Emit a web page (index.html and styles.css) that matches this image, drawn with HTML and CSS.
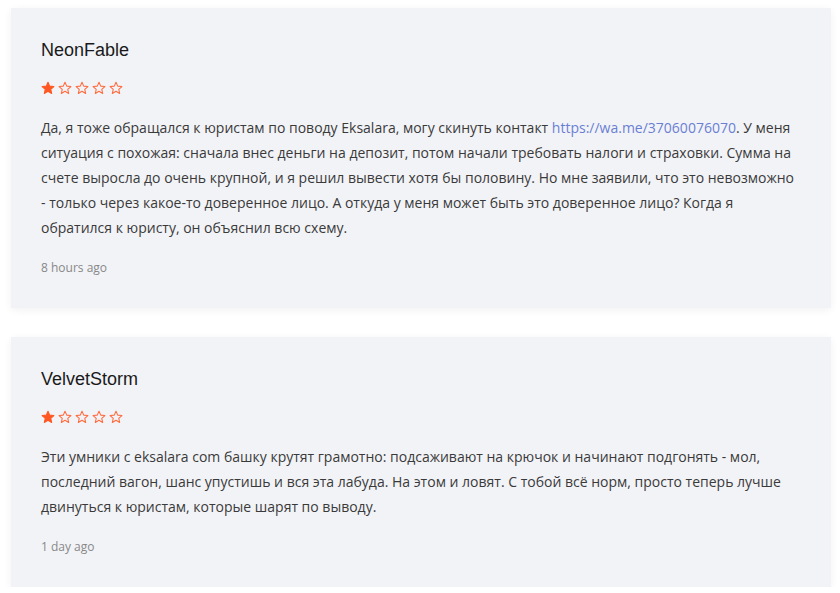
FILE: index.html
```html
<!DOCTYPE html>
<html lang="ru">
<head>
<meta charset="utf-8">
<link rel="stylesheet" href="styles.css">
</head>
<body>
<svg width="0" height="0" class="defs">
  <defs>
    <symbol id="star" viewBox="0 0 24 24">
      <path d="M12 2.2l2.95 6.6 7.2.7-5.42 4.8 1.57 7.07L12 17.7l-6.3 3.67 1.57-7.07L1.85 9.5l7.2-.7z"/>
    </symbol>
  </defs>
</svg>
<div class="list">
  <div class="review">
    <div class="name">NeonFable</div>
    <div class="stars">
      <svg class="star full"><use href="#star"/></svg>
      <svg class="star"><use href="#star"/></svg>
      <svg class="star"><use href="#star"/></svg>
      <svg class="star"><use href="#star"/></svg>
      <svg class="star"><use href="#star"/></svg>
    </div>
    <p class="text">Да, я тоже обращался к юристам по поводу Eksalara, могу скинуть контакт <a class="link" href="#">https://wa.me/37060076070</a>. У меня ситуация с похожая: сначала внес деньги на депозит, потом начали требовать налоги и страховки. Сумма на счете выросла до очень крупной, и я решил вывести хотя бы половину. Но мне заявили, что это невозможно - только через какое-то доверенное лицо. А откуда у меня может быть это доверенное лицо? Когда я обратился к юристу, он объяснил всю схему.</p>
    <div class="time">8 hours ago</div>
  </div>
  <div class="review">
    <div class="name">VelvetStorm</div>
    <div class="stars">
      <svg class="star full"><use href="#star"/></svg>
      <svg class="star"><use href="#star"/></svg>
      <svg class="star"><use href="#star"/></svg>
      <svg class="star"><use href="#star"/></svg>
      <svg class="star"><use href="#star"/></svg>
    </div>
    <p class="text">Эти умники с eksalara com башку крутят грамотно: подсаживают на крючок и начинают подгонять - мол, последний вагон, шанс упустишь и вся эта лабуда. На этом и ловят. С тобой всё норм, просто теперь лучше двинуться к юристам, которые шарят по выводу.</p>
    <div class="time">1 day ago</div>
  </div>
</div>
</body>
</html>
```

FILE: styles.css
```css
html, body {
  margin: 0;
  padding: 0;
  background: #ffffff;
}
.defs {
  position: absolute;
  width: 0;
  height: 0;
}
.list {
  display: flex;
  flex-direction: column;
  gap: 29px;
  padding: 8px 9px 0 11px;
  width: 820px;
}
.review {
  background: #f2f3f7;
  box-shadow: 0 2px 8px rgba(0, 0, 0, 0.06);
  padding: 32px 30px 31px 30px;
}
.name {
  font-family: "Liberation Sans", Arial, sans-serif;
  font-size: 18px;
  line-height: 21px;
  color: #1a1a1a;
}
.stars {
  display: flex;
  gap: 3px;
  margin-top: 20px;
  height: 14px;
  align-items: center;
}
.star {
  width: 14px;
  height: 14px;
  fill: none;
  stroke: #ff6a3d;
  stroke-width: 1.8;
  stroke-linejoin: round;
}
.star.full {
  fill: #ff5722;
  stroke: #ff5722;
}
.text {
  margin: 20px 0 0 0;
  font-family: "Open Sans", sans-serif;
  font-size: 14px;
  line-height: 25px;
  color: #3a3a3a;
}
.link {
  color: #6a7fd4;
  text-decoration: none;
}
.time {
  margin-top: 19px;
  font-family: "Open Sans", sans-serif;
  font-size: 12px;
  line-height: 18px;
  color: #888888;
}
```
